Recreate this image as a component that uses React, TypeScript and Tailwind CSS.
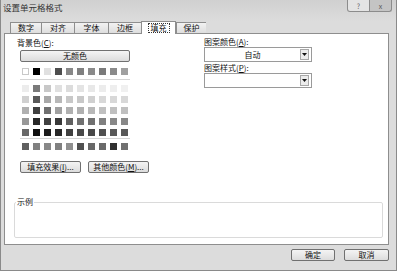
const row0 = ["bg-[#ffffff] border border-[#c8c8c8]", "bg-[#000000]", "bg-[#e0e0e0]", "bg-[#4e4e4e]", "bg-[#888888]", "bg-[#808080]", "bg-[#8a8a8a]", "bg-[#7a7a7a]", "bg-[#8a8a8a]", "bg-[#a0a0a0]"];

const grid = [
  ["bg-[#ececec]", "bg-[#7a7a7a]", "bg-[#c8c8c8]", "bg-[#e0e0e0]", "bg-[#dcdcdc]", "bg-[#e4e4e4]", "bg-[#e8e8e8]", "bg-[#ececec]", "bg-[#eeeeee]", "bg-[#f0f0f0]"],
  ["bg-[#d0d0d0]", "bg-[#5a5a5a]", "bg-[#a8a8a8]", "bg-[#b8b8b8]", "bg-[#c8c8c8]", "bg-[#c8c8c8]", "bg-[#d0d0d0]", "bg-[#d8d8d8]", "bg-[#d8d8d8]", "bg-[#d8d8d8]"],
  ["bg-[#b0b0b0]", "bg-[#404040]", "bg-[#707070]", "bg-[#a0a0a0]", "bg-[#b0b0b0]", "bg-[#b0b0b0]", "bg-[#b8b8b8]", "bg-[#c0c0c0]", "bg-[#c0c0c0]", "bg-[#c0c0c0]"],
  ["bg-[#989898]", "bg-[#282828]", "bg-[#404040]", "bg-[#383838]", "bg-[#606060]", "bg-[#707070]", "bg-[#707070]", "bg-[#808080]", "bg-[#888888]", "bg-[#888888]"],
  ["bg-[#686868]", "bg-[#101010]", "bg-[#1c1c1c]", "bg-[#282828]", "bg-[#404040]", "bg-[#484848]", "bg-[#484848]", "bg-[#505050]", "bg-[#585858]", "bg-[#585858]"],
];

const lastRow = ["bg-[#606060]", "bg-[#808080]", "bg-[#888888]", "bg-[#808080]", "bg-[#909090]", "bg-[#505050]", "bg-[#686868]", "bg-[#6a6a6a]", "bg-[#303030]", "bg-[#707070]"];

const tabs = ["数字", "对齐", "字体", "边框", "填充", "保护"];
const tabW = ["w-[31px]", "w-[33px]", "w-[34px]", "w-[33px]", "w-[35px]", "w-[30px]"];

function Swatches({ colors }: { colors: string[] }) {
  return (
    <div className="flex gap-[4px]">
      {colors.map((c, i) => (
        <div key={i} className={"w-[7px] h-[7px] " + c} />
      ))}
    </div>
  );
}

function Btn({ children, w }: { children: React.ReactNode; w: string }) {
  return (
    <div className={"h-[12px] flex items-center justify-center border border-[#707070] rounded-[2px] bg-linear-to-b from-[#f4f4f4] to-[#dcdcdc] " + w}>
      {children}
    </div>
  );
}

function Select({ value }: { value: string }) {
  return (
    <div className="w-[108px] h-[15px] bg-white border border-[#9a9a9a] flex items-center">
      <div className="flex-1 text-center">{value}</div>
      <div className="w-[9px] h-[11px] mr-[2px] border border-[#a8a8a8] bg-[#ececec] flex items-center justify-center">
        <svg width="5" height="3" viewBox="0 0 5 3"><path d="M0 0h5L2.5 3z" fill="#111" /></svg>
      </div>
    </div>
  );
}

export default function App() {
  return (
    <div className="w-[397px] h-[271px] flex flex-col bg-[#dcdcdc] border-l border-r border-b border-[#8a8a8a] font-['Noto_Sans_CJK_SC','Liberation_Sans',sans-serif] text-[8px] leading-[10px] text-[#111]">
      <div className="h-[21px] flex items-start bg-linear-to-b from-[#d0d0d0] to-[#dcdcdc]">
        <div className="pl-[2px] pt-[2px] text-[8.5px] text-[#333]">设置单元格格式</div>
        <div className="ml-auto mr-[4px] flex">
          <div className="w-[23px] h-[12px] border border-t-0 border-[#8c8c8c] rounded-bl-[3px] bg-[#e4e4e4] flex items-center justify-center text-[7px] text-[#666]">?</div>
          <div className="w-[22px] h-[12px] border border-t-0 border-l-0 border-[#8c8c8c] rounded-br-[3px] bg-[#c4c4c4] flex items-center justify-center text-[7px] text-[#555]">x</div>
        </div>
      </div>

      <div className="h-[12px] flex items-end pl-[9px]">
        {tabs.map((t, i) =>
          i === 4 ? (
            <div key={t} className={"h-[13px] -mb-px bg-white border border-b-0 border-[#8e8e8e] flex items-center justify-center relative z-10 " + tabW[i]}>
              <span className="border border-dotted border-[#333] px-[2px] leading-[8px]">填充</span>
            </div>
          ) : (
            <div key={t} className={"h-[11px] border border-b-0 border-r-0 border-[#8e8e8e] bg-linear-to-b from-[#f2f2f2] to-[#dedede] flex items-center justify-center " + tabW[i] + (i === 5 ? " border-r" : "")}>
              {t}
            </div>
          )
        )}
      </div>

      <div className="ml-[3px] w-[385px] h-[212px] bg-white border border-[#8e8e8e] flex flex-col">
        <div className="flex h-[139px]">
          <div className="ml-[12px] w-[187px] flex flex-col">
            <div className="mt-[4px]">背景色(<u>C</u>):</div>
            <div className="ml-[3px] mt-[2px]">
              <Btn w="w-[110px]">无颜色</Btn>
            </div>
            <div className="ml-[5px] mt-[6px]">
              <Swatches colors={row0} />
            </div>
            <div className="ml-[3px] mt-[4px] w-[110px] h-px bg-[#d4d4d4]" />
            <div className="ml-[5px] mt-[5px] flex flex-col gap-[4px]">
              {grid.map((r, i) => (
                <Swatches key={i} colors={r} />
              ))}
            </div>
            <div className="ml-[3px] mt-[2px] w-[110px] h-px bg-[#d4d4d4]" />
            <div className="ml-[5px] mt-[5px]">
              <Swatches colors={lastRow} />
            </div>
            <div className="ml-[3px] mt-[11px] flex gap-[7px]">
              <Btn w="w-[61px]">填充效果(<u>I</u>)...</Btn>
              <Btn w="w-[61px]">其他颜色(<u>M</u>)...</Btn>
            </div>
          </div>
          <div className="flex flex-col">
            <div className="mt-[3px] h-[9px] leading-[9px]">图案颜色(<u>A</u>):</div>
            <div className="mt-[1px]">
              <Select value="自动" />
            </div>
            <div className="mt-[1px] h-[10px]">图案样式(<u>P</u>):</div>
            <div>
              <Select value="" />
            </div>
          </div>
        </div>
        <fieldset className="ml-[9px] mt-[24px] w-[369px] h-[41px] border border-[#dadada] rounded-[2px]">
          <legend className="ml-[1px] px-[1px] leading-[10px]">示例</legend>
        </fieldset>
      </div>

      <div className="mt-[4px] flex justify-end gap-[9px] pr-[7px]">
        <Btn w="w-[44px]">确定</Btn>
        <Btn w="w-[45px]">取消</Btn>
      </div>
    </div>
  );
}
